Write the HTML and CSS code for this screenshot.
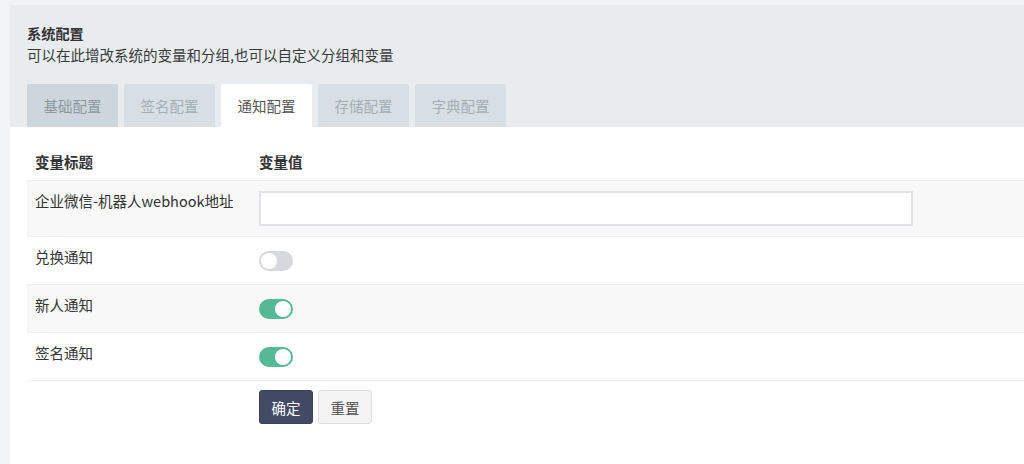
FILE: index.html
```html
<!DOCTYPE html>
<html lang="zh-CN">
<head>
<meta charset="utf-8">
<title>系统配置</title>
<link rel="stylesheet" href="styles.css">
</head>
<body>
<div class="panel">
  <div class="panel-head">
    <div class="title">系统配置</div>
    <div class="desc">可以在此增改系统的变量和分组,也可以自定义分组和变量</div>
    <div class="tabs">
      <div class="tab tab-hover">基础配置</div>
      <div class="tab">签名配置</div>
      <div class="tab active">通知配置</div>
      <div class="tab">存储配置</div>
      <div class="tab">字典配置</div>
    </div>
  </div>
  <div class="panel-body">
    <table class="cfg">
      <thead>
        <tr><th class="c1">变量标题</th><th>变量值</th></tr>
      </thead>
      <tbody>
        <tr class="odd"><td class="c1">企业微信-机器人webhook地址</td><td><input class="text-input" type="text"></td></tr>
        <tr><td class="c1">兑换通知</td><td><div class="sw-wrap"><span class="switch"></span></div></td></tr>
        <tr class="odd"><td class="c1">新人通知</td><td><div class="sw-wrap"><span class="switch on"></span></div></td></tr>
        <tr><td class="c1">签名通知</td><td><div class="sw-wrap"><span class="switch on"></span></div></td></tr>
      </tbody>
    </table>
    <div class="actions">
      <button class="btn btn-primary">确定</button>
      <button class="btn btn-default">重置</button>
    </div>
  </div>
</div>
</body>
</html>
```

FILE: styles.css
```css
html, body {
  margin: 0;
  padding: 0;
  background: #f2f3f5;
  font-family: "Noto Sans CJK SC", "Noto Sans", sans-serif;
  font-size: 14.5px;
  color: #333;
}
.panel {
  margin: 5px 0 0 10px;
  height: 459px;
  background: #fff;
  display: flex;
  flex-direction: column;
}
.panel-head {
  background: #e8ecef;
  padding: 17px 0 0 17px;
}
.title {
  font-weight: bold;
  font-size: 14.2px;
  line-height: 22px;
  color: #333;
}
.desc {
  line-height: 22px;
  color: #3a3a3a;
}
.tabs {
  display: flex;
  gap: 6px;
  margin-top: 18px;
}
.tab {
  width: 91px;
  height: 43px;
  line-height: 43px;
  text-align: center;
  background: #d8dfe4;
  color: #a4aeb5;
  border-radius: 2px 2px 0 0;
}
.tab-hover {
  background: #cdd6dd;
  color: #8c969e;
}
.tab.active {
  background: #fff;
  color: #555;
}
.panel-body {
  padding: 16px 0 0 17px;
}
.cfg {
  width: 100%;
  border-collapse: collapse;
}
.cfg th {
  text-align: left;
  font-weight: bold;
  height: 37px;
  padding: 0 8px;
  vertical-align: middle;
  line-height: 20px;
  color: #333;
}
.cfg tr {
  border-bottom: 1px solid #eeeeee;
}
.cfg td {
  padding: 10px 8px;
  vertical-align: top;
  line-height: 20px;
  color: #333;
}
.cfg .c1 {
  width: 208px;
}
.cfg tr.odd {
  background: #f8f8f8;
}
.text-input {
  display: block;
  box-sizing: border-box;
  width: 654px;
  height: 35px;
  margin: 0;
  border: 2px solid #e2e3e7;
  background: #fff;
  outline: none;
}
.sw-wrap {
  height: 27px;
  display: flex;
  align-items: center;
}
.switch {
  position: relative;
  display: inline-block;
  box-sizing: border-box;
  width: 34px;
  height: 20px;
  border-radius: 10px;
  background: #d6d8de;
}
.switch::after {
  content: "";
  position: absolute;
  top: 2px;
  left: 2px;
  width: 16px;
  height: 16px;
  border-radius: 50%;
  background: #fff;
}
.switch.on {
  background: #55b995;
}
.switch.on::after {
  left: 16px;
}
.actions {
  display: flex;
  gap: 5px;
  padding-left: 232px;
  margin-top: 9px;
}
.btn {
  box-sizing: border-box;
  width: 54px;
  height: 34px;
  border-radius: 3px;
  font-family: inherit;
  font-size: 14.5px;
  padding: 0;
  cursor: pointer;
}
.btn-primary {
  background: #434a65;
  border: 1px solid #3a4159;
  color: #fff;
}
.btn-default {
  background: #f4f4f4;
  border: 1px solid #dddddd;
  color: #555;
}
```
